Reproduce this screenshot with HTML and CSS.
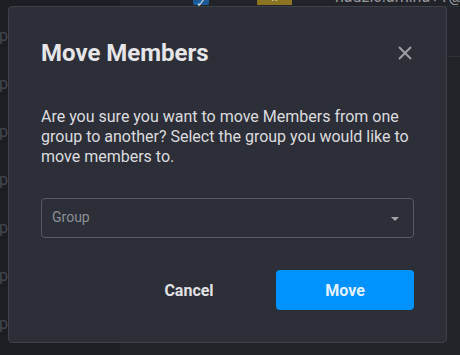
FILE: index.html
```html
<!DOCTYPE html>
<html lang="en">
<head>
    <meta charset="UTF-8">
    <meta name="viewport" content="width=device-width, initial-scale=1.0">
    <title>Move Members</title>
    <link rel="stylesheet" href="styles.css">
</head>
<body>

    <div class="page">
        <!-- Sidebar behind the overlay -->
        <aside class="sidebar">
            <div class="side-item">p</div>
            <div class="side-item">p</div>
            <div class="side-item">p</div>
            <div class="side-item">p</div>
            <div class="side-item">p</div>
            <div class="side-item">p</div>
            <div class="side-item">p</div>
        </aside>

        <!-- Members table behind the overlay -->
        <main class="main">
            <div class="row row-top">
                <div class="cell cell-pad"></div>
                <div class="cell cell-check"><span class="checkbox">&#10003;</span></div>
                <div class="cell cell-badge"><span class="badge">II</span></div>
                <div class="cell cell-email">hadzic.amina+1@nsoft.com</div>
            </div>
            <div class="row row-band"></div>
        </main>
    </div>

    <!-- Modal -->
    <div class="modal">
        <div class="modal-header">
            <h2>Move Members</h2>
            <button class="close" aria-label="Close">
                <svg width="14" height="14" viewBox="0 0 14 14">
                    <path d="M1 1 L13 13 M13 1 L1 13" stroke="currentColor" stroke-width="2" fill="none"/>
                </svg>
            </button>
        </div>
        <p class="modal-text">Are you sure you want to move Members from one group to another? Select the group you would like to move members to.</p>
        <div class="select">
            <span class="placeholder">Group</span>
            <span class="arrow"></span>
        </div>
        <div class="actions">
            <button class="btn btn-cancel">Cancel</button>
            <button class="btn btn-move">Move</button>
        </div>
    </div>

</body>
</html>
```

FILE: styles.css
```css
body {
    font-family: Roboto, "Liberation Sans", Arial, sans-serif;
    margin: 0;
    padding: 0;
    background-color: #202229;
    color: #e4e4e6;
    width: 460px;
    height: 355px;
    overflow: hidden;
    position: relative;
}

.page {
    display: flex;
    height: 355px;
}

.sidebar {
    width: 120px;
    flex-shrink: 0;
    background-color: #1c1e23;
    padding-top: 24px;
}

.side-item {
    height: 48px;
    font-size: 16px;
    line-height: 24px;
    color: #44474e;
    margin-left: -1px;
}

.main {
    flex: 1;
    min-width: 0;
    overflow: hidden;
    background-color: #212329;
}

.row {
    display: flex;
    border-bottom: 1px solid #2d3037;
}

.row-top {
    height: 24px;
    margin-top: -18px;
    align-items: flex-start;
}

.row-band {
    height: 49px;
    background-color: #23252c;
}

.cell-pad {
    width: 73px;
    flex-shrink: 0;
}

.cell-check {
    width: 64px;
    flex-shrink: 0;
}

.checkbox {
    display: block;
    width: 16px;
    height: 22px;
    margin-top: 1px;
    background-color: #1b5c98;
    border-radius: 2px;
    color: #c9d7e6;
    font-size: 12px;
    line-height: 40px;
    text-align: center;
}

.cell-badge {
    width: 78px;
    flex-shrink: 0;
}

.badge {
    display: block;
    width: 35px;
    height: 22px;
    margin-top: 1px;
    background-color: #8c7522;
    color: #d9d3bb;
    font-size: 13px;
    line-height: 28px;
    text-align: center;
}

.cell-email {
    font-size: 16px;
    line-height: 18px;
    color: #95979c;
    white-space: nowrap;
    margin-top: 6px;
}

/* Modal */
.modal {
    position: absolute;
    top: 6px;
    left: 8px;
    width: 373px;
    padding: 32px;
    background-color: #2c2f38;
    border: 1px solid #3e414a;
    border-radius: 4px;
}

.modal-header {
    display: flex;
    justify-content: space-between;
    align-items: center;
}

.modal-header h2 {
    margin: 0;
    font-size: 24px;
    line-height: 28px;
    font-weight: 700;
    color: #e6e6e8;
}

.close {
    background: none;
    border: none;
    padding: 0;
    margin-right: 2px;
    margin-top: -1px;
    color: #9c9ea4;
    display: flex;
    cursor: pointer;
}

.modal-text {
    margin: 40px 0 0;
    font-size: 16px;
    line-height: 20px;
    color: #dcdcdf;
}

.select {
    margin-top: 31px;
    height: 38px;
    border: 1px solid #575a63;
    border-radius: 4px;
    display: flex;
    align-items: center;
    justify-content: space-between;
    padding: 0 14px 0 10px;
}

.placeholder {
    font-size: 14px;
    color: #8d9096;
    margin-top: -2px;
}

.arrow {
    width: 0;
    height: 0;
    border-left: 4px solid transparent;
    border-right: 4px solid transparent;
    border-top: 4px solid #a3a5aa;
    margin-top: 2px;
}

.actions {
    display: flex;
    justify-content: flex-end;
    gap: 18px;
    margin-top: 32px;
}

.btn {
    width: 138px;
    height: 40px;
    border: none;
    border-radius: 4px;
    font-family: Roboto, "Liberation Sans", Arial, sans-serif;
    font-size: 16px;
    font-weight: 700;
    cursor: pointer;
}

.btn-cancel {
    background: none;
    color: #e2e2e5;
}

.btn-move {
    background-color: #0092ff;
    color: #e4f1ff;
}
```
